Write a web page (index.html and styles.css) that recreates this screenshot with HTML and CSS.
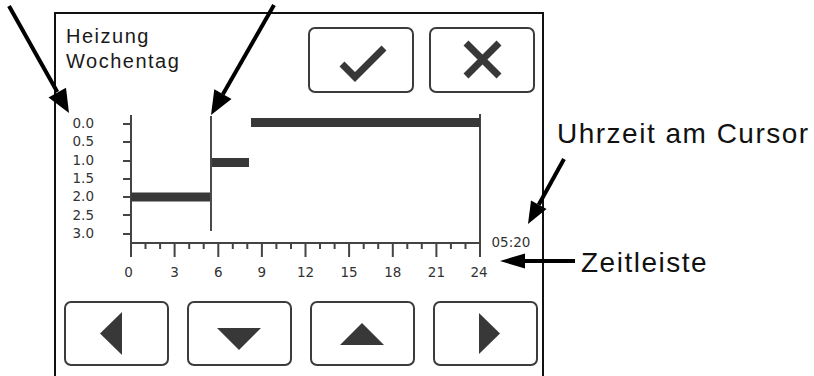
FILE: index.html
```html
<!DOCTYPE html>
<html lang="de">
<head>
    <meta charset="utf-8">
    <title>Heizung Wochentag</title>
    <link rel="stylesheet" href="styles.css">
</head>
<body>
<div class="page">
    <div class="screen">
        <div class="screen-head">
            <div class="title">Heizung<br>Wochentag</div>
            <div class="actions">
                <button class="key key-top">
                    <svg width="102" height="62" viewBox="2 2 102 62"><polyline class="glyph-line" points="34,37 47,50 76,21"/></svg>
                </button>
                <button class="key key-top">
                    <svg width="102" height="62" viewBox="2 2 102 62"><path class="glyph-line" d="M37 16 L70 49 M70 16 L37 49"/></svg>
                </button>
            </div>
        </div>

        <svg class="chart" width="486" height="200" viewBox="56 93 486 200">
            <g class="axis">
                <path d="M131 115 V244 M130 243 H481 M480 114 V257"/>
                <path d="M123 124 h8 M123 142 h8 M123 161 h8 M123 179 h8 M123 197 h8 M123 215 h8 M123 234 h8"/>
                <path d="M145.5 244 v5 M160.1 244 v5 M189.2 244 v5 M203.7 244 v5 M232.8 244 v5 M247.3 244 v5 M276.4 244 v5 M291 244 v5 M320 244 v5 M334.6 244 v5 M363.7 244 v5 M378.2 244 v5 M407.3 244 v5 M421.8 244 v5 M450.9 244 v5 M465.5 244 v5"/>
                <path d="M131 244 v13 M174.6 244 v13 M218.3 244 v13 M261.9 244 v13 M305.5 244 v13 M349.1 244 v13 M392.8 244 v13 M436.4 244 v13"/>
            </g>
            <g class="labels">
                <text x="72.5" y="128">0.0</text>
                <text x="72.5" y="146.4">0.5</text>
                <text x="72.5" y="165.4">1.0</text>
                <text x="72.5" y="183.4">1.5</text>
                <text x="72.5" y="201.4">2.0</text>
                <text x="72.5" y="219.7">2.5</text>
                <text x="72.5" y="238">3.0</text>
            </g>
            <g class="labels hours">
                <text x="128.5" y="276.6">0</text>
                <text x="174.6" y="276.6">3</text>
                <text x="218.3" y="276.6">6</text>
                <text x="261.9" y="276.6">9</text>
                <text x="305.5" y="276.6">12</text>
                <text x="349.1" y="276.6">15</text>
                <text x="392.8" y="276.6">18</text>
                <text x="436.4" y="276.6">21</text>
                <text x="479" y="276.6">24</text>
            </g>
            <g class="bars">
                <rect x="131" y="192.5" width="80" height="9"/>
                <rect x="211" y="158" width="38" height="9"/>
                <rect x="251" y="118" width="229" height="9"/>
            </g>
            <line class="cursor" x1="211" y1="116" x2="211" y2="231"/>
            <text class="labels" x="491.5" y="246.5">05:20</text>
        </svg>

        <div class="keys">
            <button class="key key-nav">
                <svg width="101" height="61" viewBox="2 2 101 61"><polygon class="glyph" points="58,11 58,54 36,32.5"/></svg>
            </button>
            <button class="key key-nav">
                <svg width="101" height="61" viewBox="2 2 101 61"><polygon class="glyph" points="30,27 74,27 52,49"/></svg>
            </button>
            <button class="key key-nav">
                <svg width="101" height="61" viewBox="2 2 101 61"><polygon class="glyph" points="30,44 74,44 52,22"/></svg>
            </button>
            <button class="key key-nav">
                <svg width="101" height="61" viewBox="2 2 101 61"><polygon class="glyph" points="46,12 46,53 67,32.5"/></svg>
            </button>
        </div>
    </div>

    <!-- Beschriftung mit Pfeilen -->
    <svg class="notes" width="814" height="376" viewBox="0 0 814 376">
        <g class="arrow">
            <line x1="9" y1="6" x2="57.3" y2="92.1"/>
            <polygon points="69,113 48.5,97.5 66,87.7"/>
            <line x1="274" y1="5" x2="222.9" y2="94.2"/>
            <polygon points="211,115 231.5,99 214.3,89.2"/>
            <line x1="564" y1="159" x2="538.7" y2="204.7"/>
            <polygon points="528,224 546.5,209 531,200.4"/>
            <line x1="575" y1="261" x2="524" y2="261"/>
            <polygon points="500,261 525,253.5 525,268.5"/>
        </g>
        <text class="note" x="557" y="143">Uhrzeit am Cursor</text>
        <text class="note" x="581" y="272">Zeitleiste</text>
    </svg>
</div>
</body>
</html>
```

FILE: styles.css
```css
body {
    margin: 0;
    background: #fff;
    font-family: "Liberation Sans", Arial, sans-serif;
}
.page {
    position: relative;
    width: 814px;
    height: 376px;
    overflow: hidden;
}
.screen {
    margin: 12px 0 0 54px;
    width: 486px;
    height: 380px;
    border: 2px solid #111;
    border-bottom: 0;
}
.screen-head {
    display: flex;
    justify-content: space-between;
    padding: 13px 7px 0 10px;
}
.title {
    margin-top: -3px;
    font-size: 20px;
    line-height: 25px;
    letter-spacing: 1.5px;
    color: #1a1a1a;
}
.actions {
    display: flex;
    gap: 15px;
}
.key {
    display: block;
    box-sizing: border-box;
    padding: 0;
    border: 2px solid #3c3c3c;
    border-radius: 7px;
    background: #fff;
}
.key svg {
    display: block;
}
.key-top {
    width: 106px;
    height: 66px;
}
.key-nav {
    width: 105px;
    height: 65px;
}
.glyph-line {
    fill: none;
    stroke: #383838;
    stroke-width: 7;
    stroke-linecap: butt;
    stroke-linejoin: miter;
}
.glyph {
    fill: #383838;
}
.chart {
    display: block;
}
.axis path {
    fill: none;
    stroke: #444;
    stroke-width: 2;
}
.labels text, text.labels {
    font-family: "DejaVu Sans", Verdana, sans-serif;
    font-size: 13.5px;
    fill: #333;
}
.hours text {
    text-anchor: middle;
}
.bars rect {
    fill: #383838;
}
.cursor {
    stroke: #4a4a4a;
    stroke-width: 2;
}
.keys {
    display: flex;
    gap: 18px;
    padding: 8px 0 0 8px;
}
.notes {
    position: absolute;
    top: 0;
    left: 0;
    pointer-events: none;
}
.arrow line {
    stroke: #000;
    stroke-width: 4;
}
.arrow polygon {
    fill: #000;
}
.note {
    font-family: "Liberation Sans", Arial, sans-serif;
    font-size: 28px;
    letter-spacing: 1.5px;
    fill: #111;
}
```
